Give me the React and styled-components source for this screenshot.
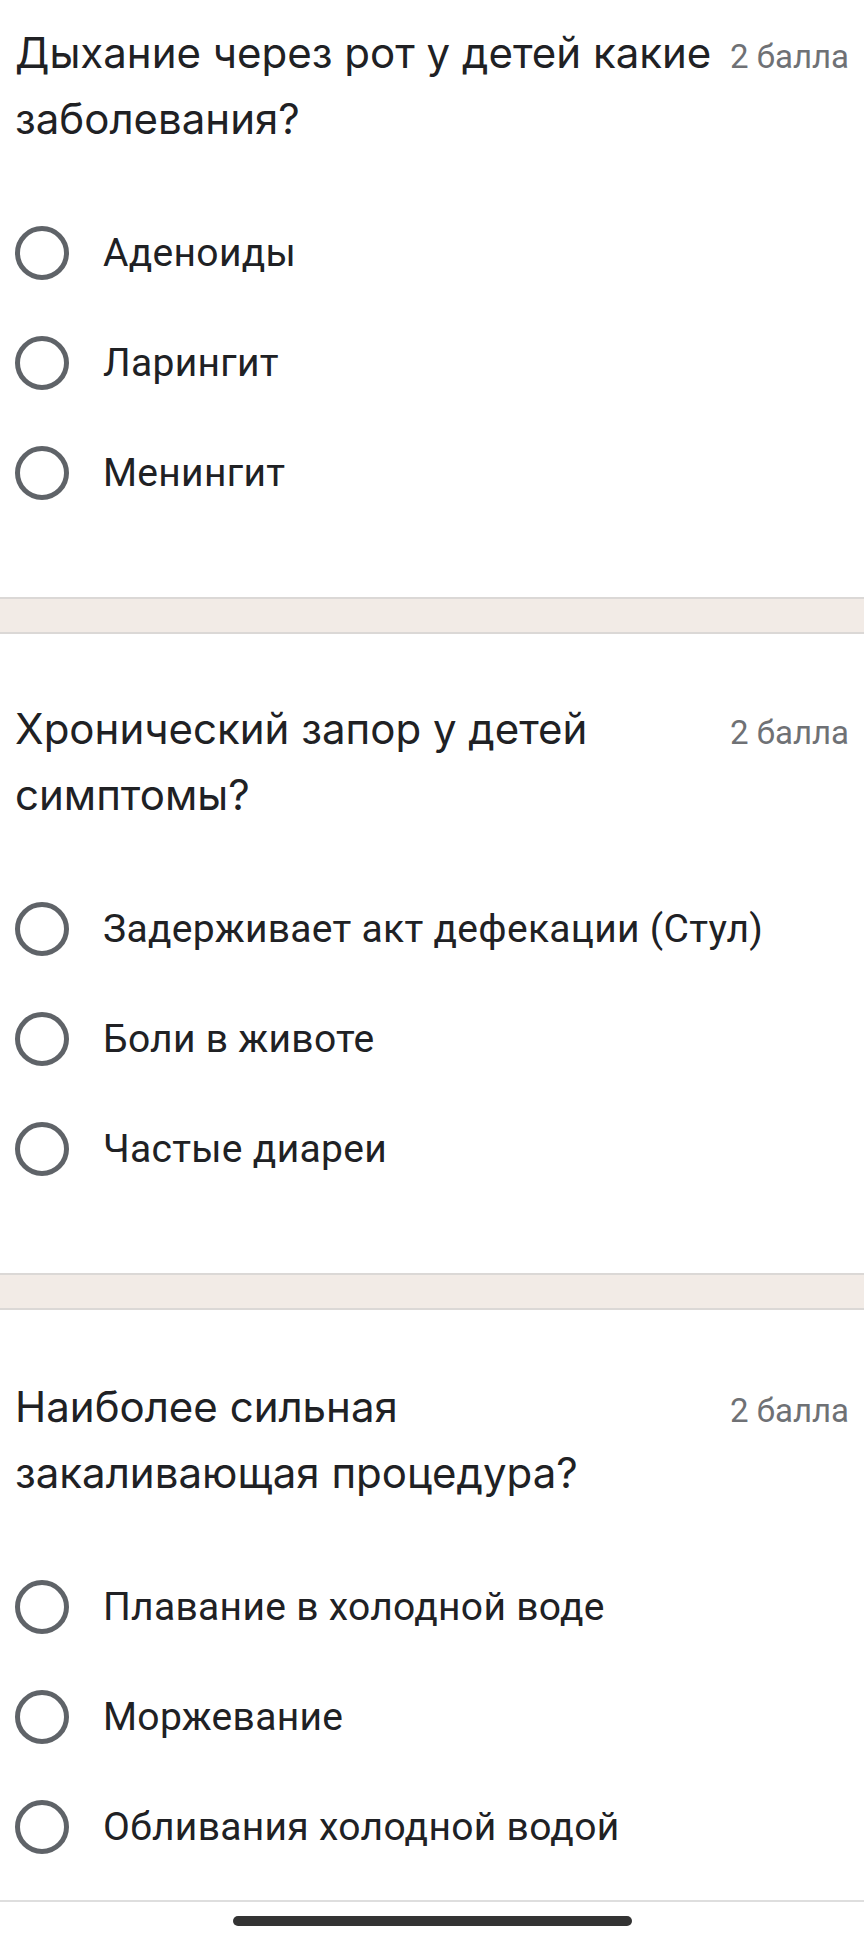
import React from "react";
import styled, { createGlobalStyle } from "styled-components";

const Global = createGlobalStyle`
  html, body { margin: 0; padding: 0; background: #ffffff; }
  body { font-family: Roboto, "Noto Sans", sans-serif; -webkit-font-smoothing: antialiased; }
`;

const Page = styled.div`
  width: 864px;
  min-height: 1944px;
  background: #ffffff;
  display: flex;
  flex-direction: column;
`;

const Card = styled.section`
  padding: ${(p) => p.$top}px 15px ${(p) => p.$bottom}px 15px;
  display: flex;
  flex-direction: column;
`;

const Header = styled.div`
  display: flex;
  align-items: baseline;
  justify-content: space-between;
`;

const Title = styled.h2`
  margin: 0;
  flex: 1;
  min-width: 0;
  font-family: Inter, "Open Sans", sans-serif;
  font-weight: 400;
  font-size: 42px;
  line-height: 66px;
  color: #202124;
  letter-spacing: 0;
`;

const TitleLine = styled.span`
  display: block;
  white-space: nowrap;
`;

const Points = styled.span`
  flex: none;
  margin-left: 16px;
  font-family: Roboto, sans-serif;
  font-size: 33px;
  color: #6f7175;
`;

const Options = styled.div`
  margin-top: 46px;
  display: flex;
  flex-direction: column;
`;

const Option = styled.label`
  height: 110px;
  display: flex;
  align-items: center;
  gap: 34px;
`;

const Radio = styled.span`
  width: 54px;
  height: 54px;
  box-sizing: border-box;
  border-radius: 50%;
  border: 5px solid #5f6368;
  flex: none;
`;

const OptionText = styled.span`
  font-family: Roboto, sans-serif;
  font-size: 39px;
  color: #202124;
  letter-spacing: 0.3px;
`;

const Divider = styled.div`
  height: 33px;
  background: #f2ebe6;
  border-top: 2px solid #dbd8d6;
  border-bottom: 2px solid #dbd8d6;
`;

const BottomBar = styled.div`
  margin-top: 18px;
  border-top: 2px solid #dedede;
  display: flex;
  justify-content: center;
  padding-top: 14px;
`;

const HomeIndicator = styled.div`
  width: 399px;
  height: 10px;
  border-radius: 5px;
  background: #333333;
`;

const questions = [
  {
    lines: ["Дыхание через рот у детей какие", "заболевания?"],
    options: ["Аденоиды", "Ларингит", "Менингит"],
    top: 20,
  },
  {
    lines: ["Хронический запор у детей", "симптомы?"],
    options: ["Задерживает акт дефекации (Стул)", "Боли в животе", "Частые диареи"],
    top: 62,
  },
  {
    lines: ["Наиболее сильная", "закаливающая процедура?"],
    options: ["Плавание в холодной воде", "Моржевание", "Обливания холодной водой"],
    top: 64,
  },
];

export default function App() {
  return (
    <>
      <Global />
      <Page>
        {questions.map((q, i) => (
          <React.Fragment key={i}>
            {i > 0 && <Divider />}
            <Card $top={q.top} $bottom={i === questions.length - 1 ? 0 : 69}>
              <Header>
                <Title>
                  {q.lines.map((l) => (
                    <TitleLine key={l}>{l}</TitleLine>
                  ))}
                </Title>
                <Points>2 балла</Points>
              </Header>
              <Options>
                {q.options.map((o) => (
                  <Option key={o}>
                    <Radio />
                    <OptionText>{o}</OptionText>
                  </Option>
                ))}
              </Options>
            </Card>
          </React.Fragment>
        ))}
        <BottomBar>
          <HomeIndicator />
        </BottomBar>
      </Page>
    </>
  );
}
